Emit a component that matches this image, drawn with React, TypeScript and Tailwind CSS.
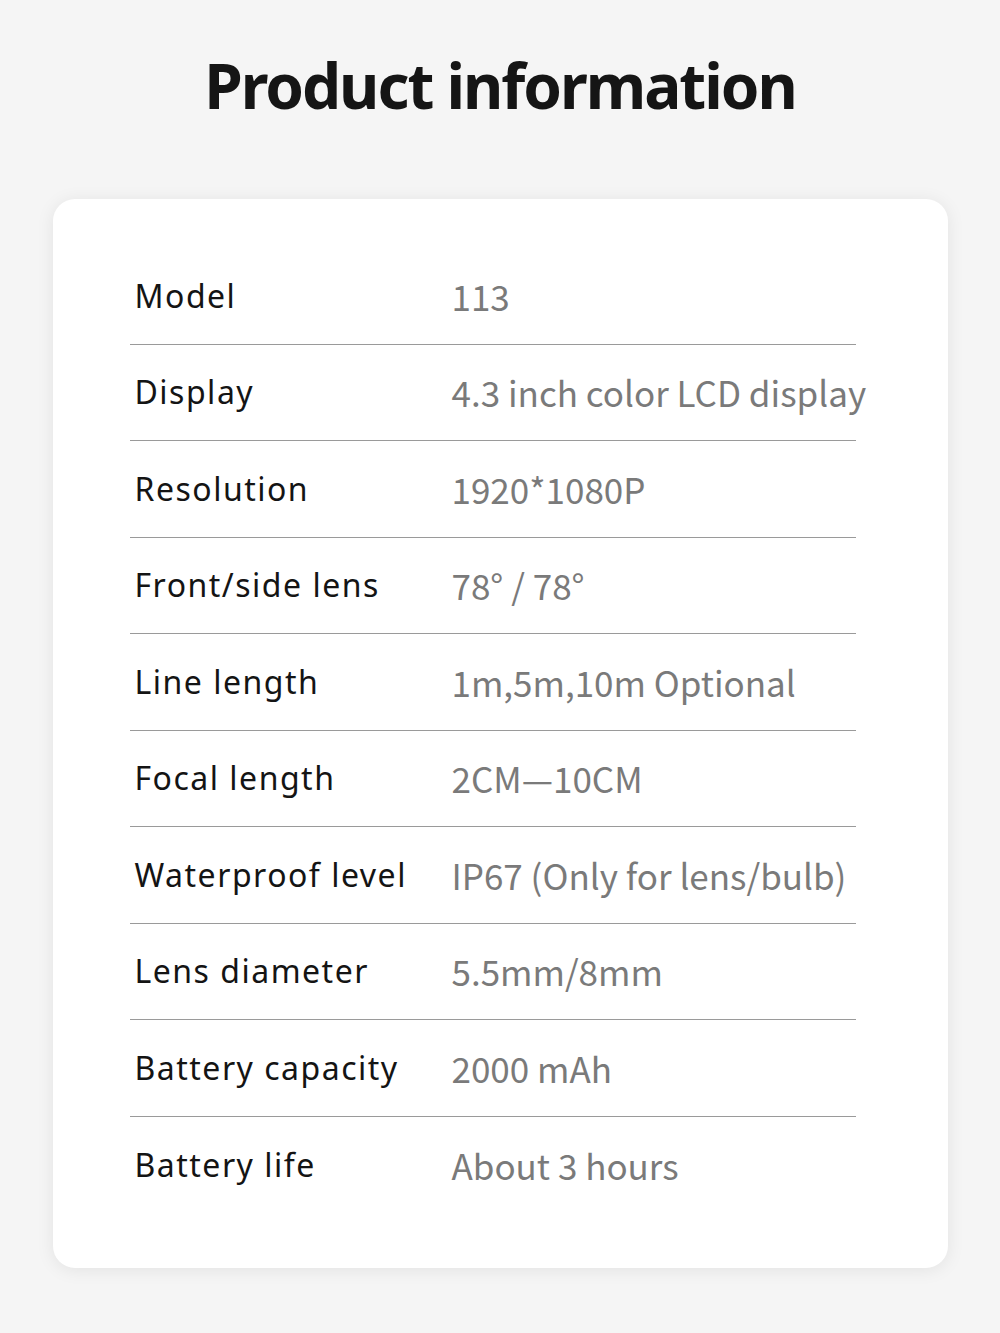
import React from 'react';

const rows: { label: string; value: string }[] = [
  { label: 'Model', value: '113' },
  { label: 'Display', value: '4.3 inch color LCD display' },
  { label: 'Resolution', value: '1920*1080P' },
  { label: 'Front/side lens', value: '78° / 78°' },
  { label: 'Line length', value: '1m,5m,10m Optional' },
  { label: 'Focal length', value: '2CM—10CM' },
  { label: 'Waterproof level', value: 'IP67 (Only for lens/bulb)' },
  { label: 'Lens diameter', value: '5.5mm/8mm' },
  { label: 'Battery capacity', value: '2000 mAh' },
  { label: 'Battery life', value: 'About 3 hours' },
];

const App: React.FC = () => {
  return (
    <div className="w-[1000px] h-[1333px] bg-[#f5f5f5] flex flex-col items-center font-['Noto_Sans','Noto_Sans_CJK_SC',sans-serif]">
      <h1 className="mt-[45px] text-[62px] leading-[80px] font-bold text-[#151515] tracking-[-2px]">
        Product information
      </h1>
      <div className="mt-[74px] w-[895px] bg-white rounded-[22px] shadow-[0_2px_18px_rgba(0,0,0,0.08)] pl-[77px] pr-[92px] pt-[49px] pb-[55px]">
        {rows.map((row, i) => (
          <div
            key={row.label}
            className={`h-[96.5px] flex items-center ${i < rows.length - 1 ? 'border-b border-[#9a9a9a]' : ''}`}
          >
            <div className="w-[322px] shrink-0 pl-[5px] text-[32px] tracking-[1.5px] text-[#141414] whitespace-nowrap">
              {row.label}
            </div>
            <div className="text-[35px] text-[#7a7a7a] whitespace-nowrap font-['Noto_Sans_CJK_SC',sans-serif]">
              {row.value}
            </div>
          </div>
        ))}
      </div>
    </div>
  );
};

export default App;
